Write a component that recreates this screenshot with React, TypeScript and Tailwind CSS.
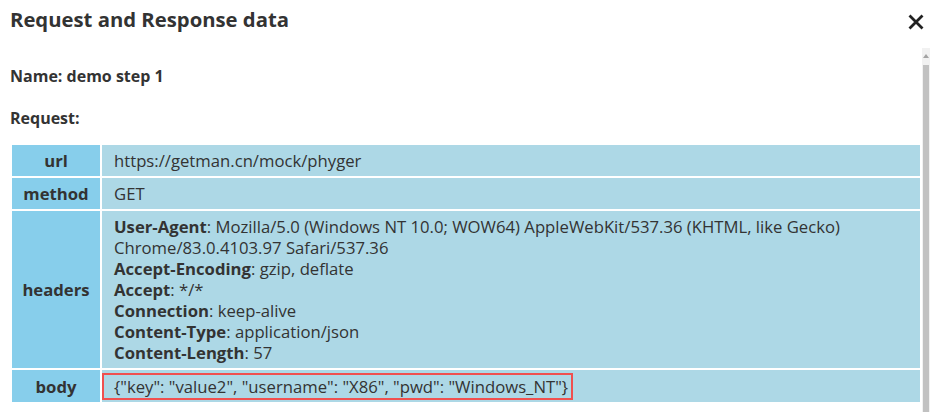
import React from "react";

const headers: [string, string][] = [
  ["User-Agent", "Mozilla/5.0 (Windows NT 10.0; WOW64) AppleWebKit/537.36 (KHTML, like Gecko) Chrome/83.0.4103.97 Safari/537.36"],
  ["Accept-Encoding", "gzip, deflate"],
  ["Accept", "*/*"],
  ["Connection", "keep-alive"],
  ["Content-Type", "application/json"],
  ["Content-Length", "57"],
];

export default function App() {
  return (
    <div
      className="w-[930px] h-[412px] overflow-hidden bg-white text-[#333333] flex flex-col"
      style={{ fontFamily: '"Open Sans", "Noto Sans", sans-serif' }}
    >
      <div className="h-[48px] flex items-start justify-between pl-[10px] pr-[6px] shrink-0">
        <h1 className="text-[20.3px] font-bold leading-[28px] mt-[5px]">Request and Response data</h1>
        <svg width="16" height="16" viewBox="0 0 16 16" className="mt-[14px]">
          <path d="M1.5 1.5 L14.5 14.5 M14.5 1.5 L1.5 14.5" stroke="#222" strokeWidth="2.8" strokeLinecap="butt" />
        </svg>
      </div>
      <div className="flex flex-1 min-h-0">
        <div className="flex-1 pl-[10px] pt-[18px]">
          <div className="text-[16px] font-bold leading-[21px]">Name: demo step 1</div>
          <div className="text-[16px] font-bold leading-[21px] mt-[21px]">Request:</div>
          <table className="w-full mt-[14px] border-separate border-spacing-[2px] text-[16.7px] leading-[21px]">
            <tbody>
              <tr>
                <td className="w-[88px] h-[31px] bg-[#87ceeb] text-center font-bold py-[5px]">url</td>
                <td className="bg-[#add8e6] px-[12px] py-[5px]">https://getman.cn/mock/phyger</td>
              </tr>
              <tr>
                <td className="w-[88px] h-[31px] bg-[#87ceeb] text-center font-bold py-[5px]">method</td>
                <td className="bg-[#add8e6] px-[12px] py-[5px]">GET</td>
              </tr>
              <tr>
                <td className="w-[88px] bg-[#87ceeb] text-center font-bold py-[5px]">headers</td>
                <td className="bg-[#add8e6] px-[12px] py-[5px]">
                  {headers.map(([k, v]) => (
                    <div key={k}>
                      <span className="font-bold">{k}</span>: {v}
                    </div>
                  ))}
                </td>
              </tr>
              <tr>
                <td className="w-[88px] h-[31px] bg-[#87ceeb] text-center font-bold py-[5px]">body</td>
                <td className="bg-[#add8e6] pt-[3px] pb-[2px]">
                  <div className="inline-block border-2 border-[#f0504f] pl-[10px] pr-[3px] py-[1px]">
                    {'{"key": "value2", "username": "X86", "pwd": "Windows_NT"}'}
                  </div>
                </td>
              </tr>
            </tbody>
          </table>
        </div>
        <div className="w-[8px] bg-[#f1f1f1] flex flex-col items-center shrink-0">
          <svg width="6" height="4" viewBox="0 0 6 4" className="mt-[6px]">
            <path d="M0 4 L3 0 L6 4 Z" fill="#a3a3a3" />
          </svg>
          <div className="w-[6px] flex-1 bg-[#c1c1c1] mt-[7px]" />
        </div>
      </div>
    </div>
  );
}
